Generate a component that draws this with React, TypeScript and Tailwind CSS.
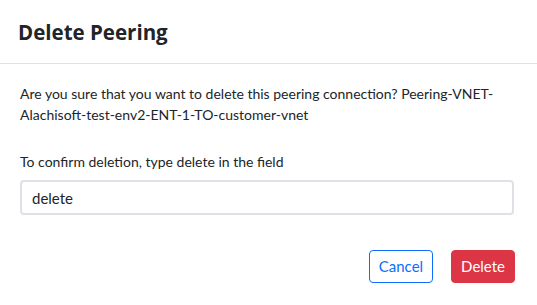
export default function App() {
  return (
    <div className="h-[305px] w-[537px] bg-white font-['Lato','Noto_Sans',sans-serif] text-[#212529]">
      <div className="flex h-[64px] items-center border-b border-[#dee2e6] px-[18px]">
        <h5 className="font-['Open_Sans',sans-serif] text-[20.5px] font-bold leading-[30px]">Delete Peering</h5>
      </div>
      <div className="px-5 pt-[19px]">
        <p className="text-[14px] leading-[21px]">
          Are you sure that you want to delete this peering connection? Peering-VNET-Alachisoft-test-env2-ENT-1-TO-customer-vnet
        </p>
        <label className="mt-[26px] block text-[14px] leading-[21px]">To confirm deletion, type delete in the field</label>
        <input
          readOnly
          value="delete"
          className="mt-[8px] h-[35px] w-[494px] rounded-[4px] border-2 border-[#dee2e6] px-[10px] text-[15px] text-[#212529] outline-none"
        />
      </div>
      <div className="mt-[35px] flex justify-end gap-[18px] pr-[22px]">
        <button className="h-[33px] rounded-[4px] border border-[#0d6efd] px-[9px] text-[15px] text-[#0d6efd]">Cancel</button>
        <button className="h-[33px] rounded-[4px] border border-[#dc3545] bg-[#dc3545] px-[9px] text-[15px] text-white">Delete</button>
      </div>
    </div>
  );
}
